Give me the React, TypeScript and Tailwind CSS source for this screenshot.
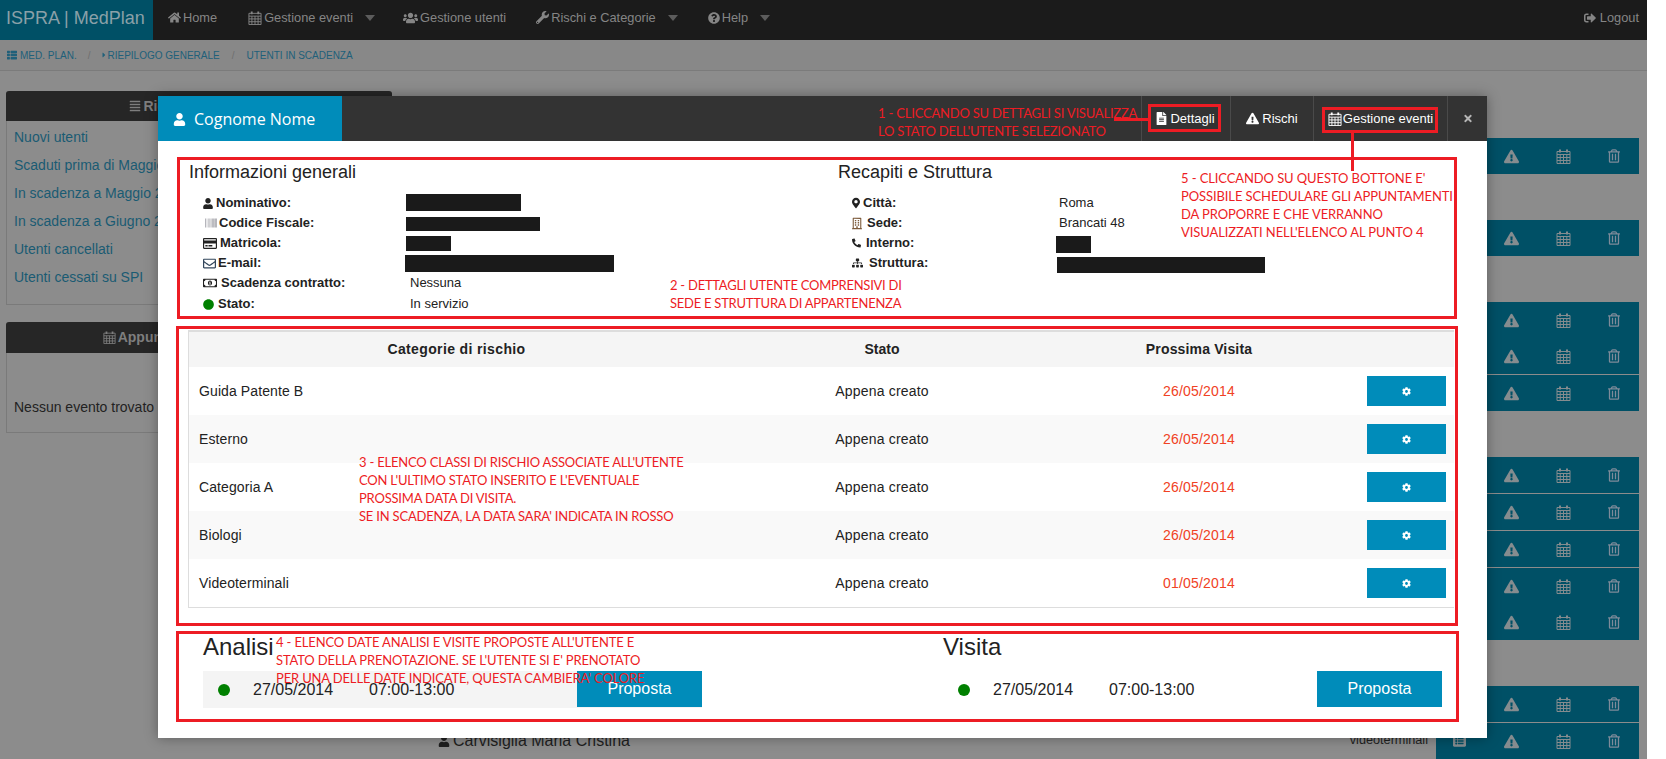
import type { ReactNode } from 'react';
import {
  FaAlignJustify,
  FaBarcode,
  FaCaretRight,
  FaCircle,
  FaCog,
  FaExclamationTriangle,
  FaFileAlt,
  FaHome,
  FaListAlt,
  FaMapMarkerAlt,
  FaPhone,
  FaQuestionCircle,
  FaRegBuilding,
  FaRegCreditCard,
  FaRegEnvelope,
  FaRegMoneyBillAlt,
  FaRegTrashAlt,
  FaSignOutAlt,
  FaSitemap,
  FaThList,
  FaTimes,
  FaUser,
  FaUsers,
  FaWrench,
} from 'react-icons/fa';

function CalendarIcon({ className = '' }: { className?: string }) {
  return (
    <svg viewBox="0 0 15 15" className={className} fill="none" stroke="currentColor" strokeWidth="1">
      <path d="M1 2.5h13v12H1z" />
      <path d="M1 5.5h13M1 8.5h13M1 11.5h13M4.2 5.5v9M7.5 5.5v9M10.8 5.5v9" />
      <path d="M4 .5v3M11 .5v3" strokeWidth="2" />
    </svg>
  );
}

function Caret() {
  return <span className="ml-[10px] border-x-[5.5px] border-t-[6px] border-x-transparent border-t-[#5c5c5c]" />;
}

const navItems: { label: string; icon: ReactNode; caret?: boolean; gap: string }[] = [
  { label: 'Home', icon: <FaHome className="w-[13px] h-[13px]" />, gap: 'mr-[31px]' },
  { label: 'Gestione eventi', icon: <CalendarIcon className="w-[14px] h-[14px]" />, caret: true, gap: 'mr-[28px]' },
  { label: 'Gestione utenti', icon: <FaUsers className="w-[15px] h-[14px]" />, gap: 'mr-[30px]' },
  { label: 'Rischi e Categorie', icon: <FaWrench className="w-[13px] h-[13px]" />, caret: true, gap: 'mr-[30px]' },
  { label: 'Help', icon: <FaQuestionCircle className="w-[12px] h-[12px]" />, caret: true, gap: '' },
];

const sideLinks = [
  'Nuovi utenti',
  'Scaduti prima di Maggio 2014',
  'In scadenza a Maggio 2014',
  'In scadenza a Giugno 2014',
  'Utenti cancellati',
  'Utenti cessati su SPI',
];

// each flag = 1px line above that row
const barGroups: boolean[][] = [
  [false],
  [false],
  [false, false, true],
  [false, true, true, true, false],
  [false, true],
];

function BarRow({ divider }: { divider: boolean }) {
  return (
    <div className={`relative flex items-center h-[36px] bg-[#005066] text-[#858c8f] ${divider ? 'mt-px' : ''}`}>
      <FaListAlt className="absolute left-[17px] w-[13px] h-[14px]" />
      <FaExclamationTriangle className="absolute left-[68px] w-[15px] h-[15px]" />
      <CalendarIcon className="absolute left-[120px] w-[15px] h-[15px]" />
      <FaRegTrashAlt className="absolute left-[172px] w-[12px] h-[14px] text-[#7e8b9a]" />
    </div>
  );
}

function Annotation({ className, lines }: { className: string; lines: string[] }) {
  return (
    <div className={`absolute z-10 font-[Lato,sans-serif] text-[13px] leading-[18px] text-[#ed1c24] whitespace-pre ${className}`}>
      {lines.join('\n')}
    </div>
  );
}

type InfoRow = {
  label: string;
  icon: ReactNode;
  labelGap: string;
  value?: string;
  bar?: string;
  rowClass?: string;
};

const leftInfo: InfoRow[] = [
  { label: 'Nominativo:', icon: <FaUser className="w-[10px] h-[11px]" />, labelGap: 'ml-[3px]', bar: 'w-[115px] h-[17px] -ml-[4px] -mt-[1px]' },
  { label: 'Codice Fiscale:', icon: <FaBarcode className="w-[16px] h-[12px] text-[#8b8b93]" />, labelGap: '', bar: 'w-[134px] h-[14px] -ml-[4px] mt-[1px]' },
  { label: 'Matricola:', icon: <FaRegCreditCard className="w-[14px] h-[13px]" />, labelGap: 'ml-[3px]', bar: 'w-[45px] h-[15px] -ml-[4px] mt-[1px]' },
  { label: 'E-mail:', icon: <FaRegEnvelope className="w-[13px] h-[13px] text-[#33475c]" />, labelGap: 'ml-[2px]', bar: 'w-[209px] h-[17px] -ml-[5px] mt-[1px]' },
  { label: 'Scadenza contratto:', icon: <FaRegMoneyBillAlt className="w-[14px] h-[12px]" />, labelGap: 'ml-[4px]', value: 'Nessuna' },
  { label: 'Stato:', icon: <FaCircle className="w-[11px] h-[11px] text-[#008000]" />, labelGap: 'ml-[4px]', value: 'In servizio', rowClass: 'mt-px' },
];

const rightInfo: InfoRow[] = [
  { label: 'Città:', icon: <FaMapMarkerAlt className="w-[8px] h-[12px]" />, labelGap: 'ml-[3px]', value: 'Roma' },
  { label: 'Sede:', icon: <FaRegBuilding className="w-[10px] h-[13px] text-[#7c5a3a]" />, labelGap: 'ml-[5px]', value: 'Brancati 48' },
  { label: 'Interno:', icon: <FaPhone className="w-[9px] h-[10px] -scale-x-100" />, labelGap: 'ml-[5px]', bar: 'w-[35px] h-[17px] -ml-[3px] mt-[2px]' },
  { label: 'Struttura:', icon: <FaSitemap className="w-[11px] h-[10px]" />, labelGap: 'ml-[6px]', bar: 'w-[208px] h-[16px] -ml-[2px] mt-[4px]' },
];

function InfoColumn({ title, rows, width }: { title: string; rows: InfoRow[]; width: string }) {
  return (
    <div className={`${width} pl-[9px]`}>
      <h3 className="text-[18px] leading-[24px] text-[#222]">{title}</h3>
      <div className="mt-[9px] ml-[14px]">
        {rows.map((row) => (
          <div key={row.label} className={`flex items-center h-[20px] text-[13px] text-[#222] ${row.rowClass ?? ''}`}>
            <div className="flex items-center w-[207px] font-bold">
              {row.icon}
              <span className={row.labelGap}>{row.label}</span>
            </div>
            {row.bar ? <div className={`bg-[#1a1a1a] ${row.bar}`} /> : <span>{row.value}</span>}
          </div>
        ))}
      </div>
    </div>
  );
}

const riskRows = [
  { name: 'Guida Patente B', date: '26/05/2014' },
  { name: 'Esterno', date: '26/05/2014' },
  { name: 'Categoria A', date: '26/05/2014' },
  { name: 'Biologi', date: '26/05/2014' },
  { name: 'Videoterminali', date: '01/05/2014' },
];

function Slot({ title, shaded, extra }: { title: string; shaded?: boolean; extra: string }) {
  return (
    <div className={`w-[499px] ${extra}`}>
      <h2 className="text-[24px] leading-[26px] text-[#222]">{title}</h2>
      <div className={`flex items-center h-[37px] mt-[11px] text-[16px] text-[#222] ${shaded ? 'bg-[#f4f4f4]' : ''}`}>
        <span className="ml-[15px] w-[12px] h-[12px] rounded-full bg-[#008000]" />
        <span className="ml-[23px] w-[116px]">27/05/2014</span>
        <span>07:00-13:00</span>
        <button className="ml-auto self-start w-[125px] h-[36px] bg-[#008cba] text-white text-[16px]">Proposta</button>
      </div>
    </div>
  );
}

function Modal() {
  return (
    <div className="absolute left-[158px] top-[96px] w-[1329px] h-[642px] bg-white shadow-[0_0_12px_rgba(0,0,0,0.35)]">
      <div className="flex h-[45px] bg-[#333] text-white text-[13px]">
        <div className="flex items-center w-[184px] bg-[#008cba] pl-[15px] pt-px font-['Open_Sans',sans-serif] text-[16px]">
          <FaUser className="w-[13px] h-[13px]" />
          <span className="ml-[8px]">Cognome Nome</span>
        </div>
        <div className="flex-1" />
        <div className="flex items-center justify-center w-[89px] pr-px border-l border-[#4a4a4a] gap-[3px]">
          <FaFileAlt className="w-[11px] h-[13px]" />
          Dettagli
        </div>
        <div className="flex items-center justify-center w-[83px] border-l border-[#4a4a4a] gap-[3px]">
          <FaExclamationTriangle className="w-[13px] h-[13px]" />
          Rischi
        </div>
        <div className="flex items-center justify-center w-[134px] border-l border-[#4a4a4a] gap-[1px]">
          <CalendarIcon className="w-[14px] h-[14px]" />
          Gestione eventi
        </div>
        <div className="flex items-center justify-center w-[40px] border-l border-[#4a4a4a] text-[#b5b5b5]">
          <FaTimes className="w-[10px] h-[11px]" />
        </div>
      </div>

      <section className="mt-[16px] ml-[19px] w-[1280px] h-[162px] border-[3px] border-[#ed1c24] flex">
        <InfoColumn title="Informazioni generali" rows={leftInfo} width="w-[649px]" />
        <InfoColumn title="Recapiti e Struttura" rows={rightInfo} width="flex-1" />
      </section>

      <section className="mt-[7px] ml-[18px] w-[1282px] h-[300px] border-[3px] border-[#ed1c24] pt-px pl-[9px]">
        <div className="w-[1266px] h-[278px] border-t-2 border-l border-b border-[#ddd]">
          <div className="grid grid-cols-[535px_316px_318px_96px] h-[35px] items-center bg-[#f5f5f5] text-[14px] font-bold text-[#222] text-center">
            <span className="tracking-[0.37px]">Categorie di rischio</span>
            <span>Stato</span>
            <span className="tracking-[0.15px]">Prossima Visita</span>
            <span />
          </div>
          {riskRows.map((row, i) => (
            <div
              key={row.name}
              className={`grid grid-cols-[535px_316px_318px_96px] h-[48px] items-center text-[14px] text-[#222] ${i % 2 === 1 ? 'bg-[#f9f9f9]' : 'bg-white'}`}
            >
              <span className="pl-[10px] tracking-[0.1px]">{row.name}</span>
              <span className="text-center tracking-[0.2px]">Appena creato</span>
              <span className="text-center tracking-[0.2px] text-[#f04124]">{row.date}</span>
              <button className="flex items-center justify-center ml-[9px] w-[79px] h-[30px] bg-[#008cba] text-white">
                <FaCog className="w-[9px] h-[9px]" />
              </button>
            </div>
          ))}
        </div>
      </section>

      <section className="mt-[5px] ml-[18px] w-[1283px] h-[91px] border-[3px] border-[#ed1c24] flex">
        <Slot title="Analisi" shaded extra="ml-[24px]" />
        <Slot title="Visita" extra="ml-[241px]" />
      </section>

      <Annotation className="left-[720px] top-[8px] tracking-[-0.2px]" lines={['1 - CLICCANDO SU DETTAGLI SI VISUALIZZA', "LO STATO DELL'UTENTE SELEZIONATO"]} />
      <div className="absolute left-[956px] top-[22px] w-[34px] h-[3px] bg-[#ed1c24]" />
      <div className="absolute left-[990px] top-[8px] w-[73px] h-[28px] border-[3px] border-[#ed1c24]" />
      <div className="absolute left-[1164px] top-[11px] w-[116px] h-[26px] border-[3px] border-[#ed1c24]" />
      <div className="absolute left-[1193px] top-[37px] w-[3px] h-[38px] bg-[#ed1c24]" />
      <Annotation className="left-[512px] top-[180px] tracking-[-0.25px]" lines={['2 - DETTAGLI UTENTE COMPRENSIVI DI', 'SEDE E STRUTTURA DI APPARTENENZA']} />
      <Annotation
        className="left-[1023px] top-[73px] tracking-[-0.1px]"
        lines={["5 - CLICCANDO SU QUESTO BOTTONE E'", 'POSSIBILE SCHEDULARE GLI APPUNTAMENTI', 'DA PROPORRE E CHE VERRANNO', "VISUALIZZATI NELL'ELENCO AL PUNTO 4"]}
      />
      <Annotation
        className="left-[201px] top-[357px] tracking-[-0.2px]"
        lines={["3 - ELENCO CLASSI DI RISCHIO ASSOCIATE ALL'UTENTE", "CON L'ULTIMO STATO INSERITO E L'EVENTUALE", 'PROSSIMA DATA DI VISITA.', "SE IN SCADENZA, LA DATA SARA' INDICATA IN ROSSO"]}
      />
      <Annotation
        className="left-[118px] top-[537px] tracking-[-0.15px]"
        lines={["4 - ELENCO DATE ANALISI E VISITE PROPOSTE ALL'UTENTE E", "STATO DELLA PRENOTAZIONE. SE L'UTENTE SI E' PRENOTATO", "PER UNA DELLE DATE INDICATE, QUESTA CAMBIERA' COLORE"]}
      />
    </div>
  );
}

export default function App() {
  return (
    <div className="relative h-[759px] overflow-hidden bg-white font-['Liberation_Sans',Arial,sans-serif]">
      <div className="w-[1647px] h-[759px] bg-[#8c8c8c]">
        <nav className="flex items-center h-[40px] bg-[#1b1b1b] text-[12.8px] text-[#858585]">
          <div className="flex items-center w-[153px] h-full pl-[6px] pb-[3px] bg-[#005066] text-[18px] text-[#8aa0a8]">ISPRA | MedPlan</div>
          <div className="flex items-center pl-[15px] h-full pb-[5px]">
            {navItems.map((item) => (
              <div key={item.label} className={`flex items-center gap-[2px] ${item.gap}`}>
                {item.icon}
                <span>{item.label}</span>
                {item.caret && <Caret />}
              </div>
            ))}
          </div>
          <div className="flex items-center gap-[4px] ml-auto mr-[8px] h-full pb-[5px]">
            <FaSignOutAlt className="w-[12px] h-[12px]" />
            Logout
          </div>
        </nav>

        <div className="flex items-center h-[31px] pl-[6px] bg-[#888] border-b border-[#7b7b7b] text-[10px] text-[#20607a]">
          <FaThList className="w-[12px] h-[10px]" />
          <span className="ml-[2px]">MED. PLAN.</span>
          <span className="ml-[11px] text-[#6f6f6f]">/</span>
          <FaCaretRight className="ml-[11px] w-[6px] h-[8px]" />
          <span>RIEPILOGO GENERALE</span>
          <span className="ml-[12px] text-[#6f6f6f]">/</span>
          <span className="ml-[12px]">UTENTI IN SCADENZA</span>
        </div>

        <div className="flex h-[688px] pl-[6px] pr-[8px]">
          <div className="w-[386px] pt-[20px]">
            <div className="h-[214px] rounded-t-[3px] border-b border-x border-[#7a7a7a]">
              <div className="flex items-center justify-center gap-[2px] h-[30px] -mx-px rounded-t-[3px] bg-[#262626] text-[14px] font-bold text-[#7e7e7e]">
                <FaAlignJustify className="w-[12px] h-[12px]" />
                Riepilogo generale
              </div>
              <ul className="pt-[2px] pl-[7px] text-[14px] text-[#1a5b73]">
                {sideLinks.map((link) => (
                  <li key={link} className="flex items-center h-[28px]">
                    {link}
                  </li>
                ))}
              </ul>
            </div>
            <div className="mt-[17px] h-[111px] rounded-t-[3px] border-b border-x border-[#7a7a7a]">
              <div className="flex items-center justify-center gap-[2px] h-[31px] -mx-px pl-[6px] rounded-t-[3px] bg-[#262626] text-[14px] font-bold text-[#7e7e7e]">
                <CalendarIcon className="w-[13px] h-[13px]" />
                Appuntamenti programmati
              </div>
              <p className="mt-[46px] pl-[7px] text-[14px] leading-[16px] text-[#222]">Nessun evento trovato</p>
            </div>
          </div>

          <div className="flex-1 flex items-end">
            <div className="flex items-center w-full h-[36px] pl-[46px] text-[#1f1f1f]">
              <FaUser className="w-[12px] h-[12px]" />
              <span className="ml-[3px] text-[16px]">Carvisiglia Maria Cristina</span>
              <span className="ml-auto mr-[8px] text-[12.7px]">videoterminali</span>
            </div>
          </div>

          <div className="w-[203px] pt-[67px] flex flex-col gap-[46px]">
            {barGroups.map((group, i) => (
              <div key={i}>
                {group.map((divider, j) => (
                  <BarRow key={j} divider={divider} />
                ))}
              </div>
            ))}
          </div>
        </div>
      </div>
      <Modal />
    </div>
  );
}
